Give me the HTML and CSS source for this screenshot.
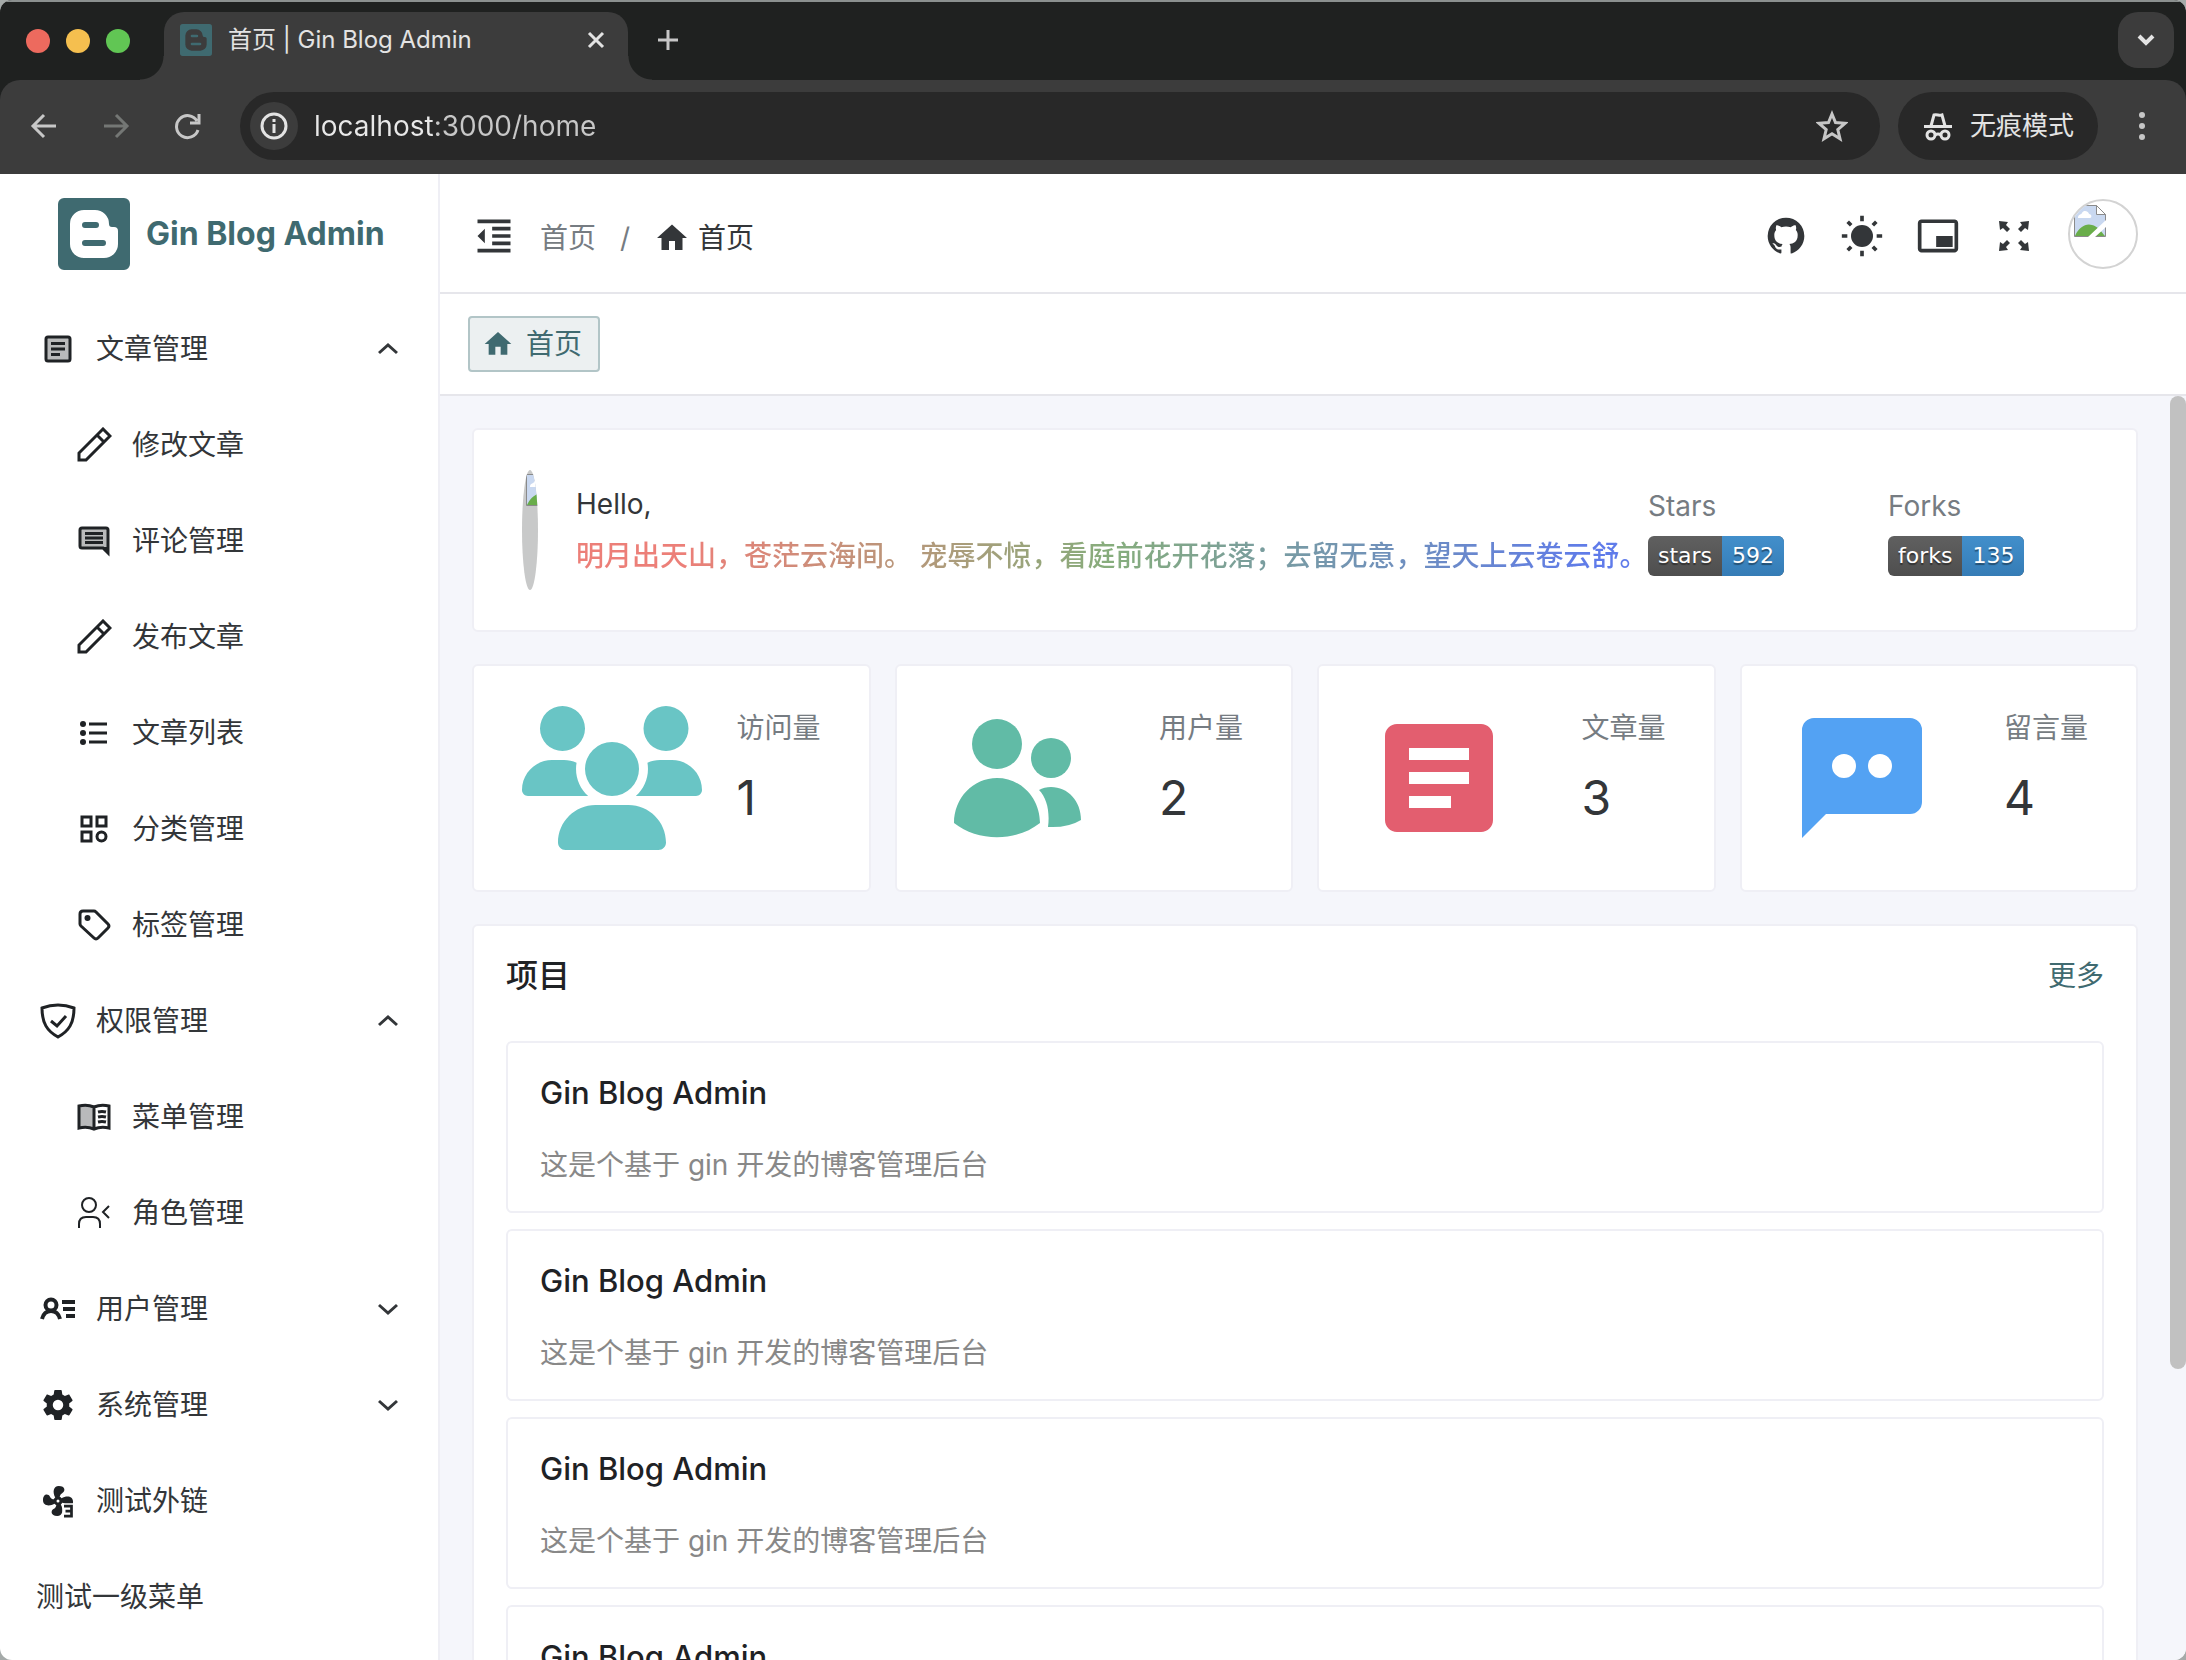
FILE: index.html
```html
<!DOCTYPE html>
<html lang="zh-CN">
<head>
<meta charset="utf-8">
<title>首页 | Gin Blog Admin</title>
<link rel="stylesheet" href="styles.css">
</head>
<body>
<svg class="sprite" aria-hidden="true">
  <symbol id="logo" viewBox="0 0 72 72"><path fill-rule="evenodd" d="M6 0h60a6 6 0 0 1 6 6v60a6 6 0 0 1-6 6H6a6 6 0 0 1-6-6V6a6 6 0 0 1 6-6zM26 12a14 14 0 0 0-14 14v20a14 14 0 0 0 14 14h20a14 14 0 0 0 14-14V33q0-4-4-4h-2q-3 0-3-3a14 14 0 0 0-14-14zM27 24h11a3 3 0 0 1 0 6H27a3 3 0 0 1 0-6zM27 42h18a3 3 0 0 1 0 6H27a3 3 0 0 1 0-6z"/></symbol>
  <symbol id="home" viewBox="0 0 24 24"><path d="M10 20v-6h4v6h5v-8h3L12 3 2 12h3v8z"/></symbol>
  <symbol id="up" viewBox="0 0 24 24"><path class="line" d="M3 16l9-8 9 8"/></symbol>
  <symbol id="pencil" viewBox="0 0 36 36"><path class="line" d="M3 33v-7L24 5l3-3 7 7-3 3L10 33zM21 8l7 7"/></symbol>
  <symbol id="image-missing" viewBox="0 0 32 32"><path fill="#c9d8f0" stroke="#8a8a8a" stroke-width="1" d="M.5.5h22L31.500 9.500v22H.5z"/><path fill="#fff" d="M4 13c0-4 3-3 4-5 2-4 7-1 7 1 3 0 3 4 1 4z"/><path fill="#69ad4a" d="M1 31C5 22 12 18 18 20c5 1 9 6 13 11z"/><path fill="#fff" d="M14 32L32 15v7L21 32zM23 0h9v9z"/><path fill="#fff" stroke="#8a8a8a" d="M22.500.5v9h9z"/></symbol>
</svg>
<div class="window">
  <header class="browser">
    <div class="tabstrip">
      <div class="lights"><i class="red"></i><i class="amber"></i><i class="green"></i></div>
      <div class="tab">
        <svg class="favicon"><use href="#logo"/></svg>
        <span class="tab-title">首页 | Gin Blog Admin</span>
        <button class="plain" aria-label="关闭"><svg class="i24" viewBox="0 0 24 24"><path class="line" d="M5 5l14 14M19 5L5 19"/></svg></button>
      </div>
      <button class="plain new-tab" aria-label="新标签页"><svg class="i24" viewBox="0 0 24 24"><path class="line" d="M12 2v20M2 12h20"/></svg></button>
      <button class="tab-search" aria-label="搜索标签页"><svg class="i24" viewBox="0 0 24 24"><path class="line thick" d="M5 8l7 7 7-7"/></svg></button>
    </div>
    <div class="toolbar">
      <button class="plain" aria-label="后退"><svg class="i28" viewBox="0 0 28 28"><path class="line" d="M26 14H4M14 3L3 14l11 11"/></svg></button>
      <button class="plain dim" aria-label="前进"><svg class="i28" viewBox="0 0 28 28"><path class="line" d="M2 14h22M14 3l11 11-11 11"/></svg></button>
      <button class="plain" aria-label="重新加载"><svg class="i28" viewBox="0 0 28 28"><path class="line" d="M24 18a11 11 0 1 1-1-9M25 2v9h-9"/></svg></button>
      <div class="omnibox">
        <button class="site-info" aria-label="网站信息"><svg class="i28" viewBox="0 0 28 28"><circle class="line" cx="14" cy="14" r="12"/><path class="line" d="M14 12v9M14 7v3"/></svg></button>
        <input class="url" type="text" aria-label="地址" value="localhost:3000/home">
        <button class="plain" aria-label="收藏"><svg class="i32" viewBox="0 0 32 32"><path class="line" d="M16 4l3.500 8.500 9.500.8-7.200 6.200 2.200 9.200-8-5-8 5 2.200-9.200L3 13.300l9.500-.8z"/></svg></button>
      </div>
      <button class="incognito"><svg class="i32" viewBox="0 0 32 32"><path class="line" d="M2 16.500h28M9 16l3-11c3-1 5 1 8 0l3 11M13 25q3-2 6 0"/><circle class="line" cx="9" cy="25" r="4"/><circle class="line" cx="23" cy="25" r="4"/></svg>无痕模式</button>
      <button class="plain" aria-label="更多选项"><svg class="i28" viewBox="0 0 28 28"><circle cx="14" cy="3" r="3"/><circle cx="14" cy="14" r="3"/><circle cx="14" cy="25" r="3"/></svg></button>
    </div>
  </header>

  <div class="app">
    <aside class="sidebar">
      <a class="brand" href="#"><svg class="brand-logo"><use href="#logo"/></svg>Gin Blog Admin</a>
      <nav class="menu">
        <a href="#"><svg class="i36" viewBox="0 0 36 36"><rect class="line tint" x="6" y="6" width="24" height="24" rx="2"/><path class="line" d="M11 12.500h14M11 18h14M11 23.500h9"/></svg>文章管理<svg class="chev"><use href="#up"/></svg></a>
        <a class="sub" href="#"><svg class="i36"><use href="#pencil"/></svg>修改文章</a>
        <a class="sub" href="#"><svg class="i36" viewBox="0 0 36 36"><path class="line tint" d="M6 5h24q2 0 2 2v23l-5-5H6q-2 0-2-2V7q0-2 2-2z"/><path d="M27 24h6v8z"/><path class="line" d="M9 10.500h18M9 15h18M9 19.500h18"/></svg>评论管理</a>
        <a class="sub" href="#"><svg class="i36"><use href="#pencil"/></svg>发布文章</a>
        <a class="sub" href="#"><svg class="i36" viewBox="0 0 36 36"><circle cx="7" cy="9" r="3"/><circle cx="7" cy="18" r="3"/><circle cx="7" cy="27" r="3"/><path class="line" d="M13 9h18M13 18h18M13 27h18"/></svg>文章列表</a>
        <a class="sub" href="#"><svg class="i36" viewBox="0 0 36 36"><path class="line" d="M6 6h9v9H6zM21 6h9v9h-9zM6 21h9v9H6z"/><circle class="line" cx="25.500" cy="25.500" r="4.500"/></svg>分类管理</a>
        <a class="sub" href="#"><svg class="i36" viewBox="0 0 36 36"><path class="line" d="M7 4h11q1 0 2 1l12 12q2 2 0 4L22 31q-2 2-4 0L5 19q-1-1-1-2V7q0-3 3-3z"/><circle cx="11.500" cy="11" r="3"/></svg>标签管理</a>
        <a href="#"><svg class="i36" viewBox="0 0 36 36"><path class="line" d="M18 2q8 0 16 3c0 15-5 23-16 29C7 28 2 20 2 5q8-3 16-3zM11 18l6 5 9-10"/></svg>权限管理<svg class="chev"><use href="#up"/></svg></a>
        <a class="sub" href="#"><svg class="i36" viewBox="0 0 36 36"><path class="tint" d="M3 7q8-2 15 0v22q-7-2-15 0z"/><path class="line" d="M3 7q8-2 15 1 7-3 15-1v22q-8-2-15 1-7-3-15-1zM18 8v22M22 13q4-1 8 0M22 18q4-1 8 0M22 23q4-1 8 0"/></svg>菜单管理</a>
        <a class="sub" href="#"><svg class="i36" viewBox="0 0 36 36"><circle class="line thin" cx="13" cy="10" r="7"/><path class="line thin" d="M3 33v-4q0-7 7-7h7q7 0 7 7v4M33 11l-6 6 6 6"/></svg>角色管理</a>
        <a href="#"><svg class="i36" viewBox="0 0 36 36"><circle class="line bold" cx="11" cy="14" r="5.500"/><path class="line bold" d="M2 28q2-8 9-8t9 8M22 11h13M23 18h12M26 25h9"/></svg>用户管理<svg class="chev down"><use href="#up"/></svg></a>
        <a href="#"><svg class="i36" viewBox="0 0 24 24"><path d="M12 15.500A3.500 3.500 0 0 1 8.500 12 3.500 3.500 0 0 1 12 8.500a3.500 3.500 0 0 1 3.500 3.500 3.500 3.500 0 0 1-3.500 3.500m7.430-2.530c.04-.32.07-.64.07-.97s-.03-.66-.07-1l2.110-1.630c.19-.15.24-.42.12-.64l-2-3.460c-.12-.22-.39-.31-.61-.22l-2.490 1c-.52-.39-1.060-.73-1.690-.98l-.37-2.650A.506.506 0 0 0 14 2h-4c-.25 0-.46.18-.5.42l-.37 2.650c-.63.25-1.170.59-1.690.98l-2.490-1c-.22-.09-.49 0-.61.22l-2 3.460c-.13.22-.07.49.12.64L4.570 11c-.04.34-.07.67-.07 1s.03.65.07.97l-2.110 1.660c-.19.15-.25.42-.12.64l2 3.460c.12.22.39.3.61.22l2.490-1.010c.52.4 1.060.74 1.690.99l.37 2.650c.04.24.25.42.5.42h4c.25 0 .46-.18.5-.42l.37-2.650c.63-.26 1.170-.59 1.690-.99l2.490 1.010c.22.08.49 0 .61-.22l2-3.460c.12-.22.07-.49-.12-.64z"/></svg>系统管理<svg class="chev down"><use href="#up"/></svg></a>
        <a href="#"><svg class="i36" viewBox="0 0 24 24"><path d="M12 11a1 1 0 0 0-1 1 1 1 0 0 0 1 1 1 1 0 0 0 1-1 1 1 0 0 0-1-1m.5-9C17 2 17.110 5.570 14.750 6.750c-.99.49-1.430 1.540-1.620 2.470.48.2.9.51 1.220.91 3.700-2 7.680-1.210 7.680 2.370 0 4.500-3.570 4.600-4.750 2.230-.5-.99-1.560-1.430-2.490-1.620-.2.48-.51.89-.91 1.220 1.990 3.690 1.200 7.670-2.380 7.670-4.500 0-4.590-3.580-2.230-4.760.98-.49 1.420-1.530 1.620-2.450-.49-.2-.92-.52-1.240-.92C5.960 15.850 2 15.070 2 11.500 2 7 5.560 6.890 6.740 9.260c.5.99 1.550 1.420 2.480 1.610.19-.48.51-.9.92-1.220C8.150 5.960 8.940 2 12.500 2"/><path fill="#fff" d="M15 13.500h9V24h-9z"/><path fill="none" stroke="currentColor" stroke-width="1.800" d="M16 15.400h5v6.700h-5M17 18.700h4"/></svg>测试外链</a>
        <a href="#">测试一级菜单</a>
      </nav>
    </aside>

    <div class="body">
      <div class="topbar">
        <button class="plain" aria-label="折叠菜单"><svg class="i44" viewBox="0 0 24 24"><path d="M11 13h10v-2H11zm0-4h10V7H11zM3 3v2h18V3zM3 21h18v-2H3zm0-9l4 4V8zm8 5h10v-2H11z"/></svg></button>
        <nav class="crumbs"><a href="#">首页</a><span>/</span><a class="here" href="#"><svg class="i36"><use href="#home"/></svg>首页</a></nav>
        <div class="actions">
          <a href="#" aria-label="GitHub"><svg class="i44" viewBox="0 0 24 24"><path d="M12 2A10 10 0 0 0 2 12c0 4.420 2.870 8.170 6.840 9.500.5.080.66-.23.66-.5v-1.690c-2.770.6-3.360-1.340-3.360-1.340-.46-1.160-1.110-1.470-1.110-1.470-.91-.62.070-.6.070-.6 1 .07 1.530 1.030 1.530 1.030.87 1.520 2.340 1.070 2.910.83.09-.65.35-1.090.63-1.340-2.220-.25-4.550-1.110-4.550-4.920 0-1.110.38-2 1.030-2.710-.1-.25-.45-1.290.1-2.640 0 0 .84-.27 2.750 1.020.79-.22 1.650-.33 2.500-.33s1.710.11 2.500.33c1.910-1.290 2.750-1.020 2.750-1.020.55 1.350.2 2.390.1 2.640.65.71 1.030 1.600 1.030 2.710 0 3.820-2.340 4.660-4.570 4.910.36.31.69.92.69 1.850V21c0 .27.16.59.67.5C19.140 20.160 22 16.420 22 12A10 10 0 0 0 12 2"/></svg></a>
          <button class="plain" aria-label="主题"><svg class="i44" viewBox="0 0 24 24"><circle cx="12" cy="12" r="6"/><path class="line" d="M12 1v3M12 20v3M1 12h3M20 12h3M4.200 4.200l1.900 1.900M17.900 17.900l1.900 1.900M4.200 19.800l1.900-1.900M17.900 6.100l1.900-1.900"/></svg></button>
          <button class="plain" aria-label="画中画"><svg class="i44" viewBox="0 0 24 24"><path d="M20 12h-9v6h9zm3 7V4.980C23 3.880 22.100 3 21 3H3c-1.100 0-2 .88-2 1.980V19c0 1.100.9 2 2 2h18c1.100 0 2-.9 2-2zm-2 .02H3V4.970h18z"/></svg></button>
          <button class="plain" aria-label="全屏"><svg class="i44" viewBox="0 0 44 44"><path d="M7 7l9 1-2 3 4 4-3 3-4-4-3 2zM37 7l-9 1 2 3-4 4 3 3 4-4 3 2zM7 37l9-1-2-3 4-4-3-3-4 4-3-2zM37 37l-9-1 2-3-4-4 3-3 4 4 3-2z"/></svg></button>
          <button class="avatar" aria-label="用户"><svg class="i32"><use href="#image-missing"/></svg></button>
        </div>
      </div>
      <div class="tags"><a class="tag" href="#"><svg><use href="#home"/></svg>首页</a></div>
      <div class="viewport">
        <main>
          <section class="card hello">
            <div class="portrait"><svg class="i32"><use href="#image-missing"/></svg></div>
            <div class="greeting"><p>Hello,</p><p class="poem">明月出天山，苍茫云海间。 宠辱不惊，看庭前花开花落；去留无意，望天上云卷云舒。</p></div>
            <div class="repo"><span>Stars</span><a class="badge" href="#"><span>stars</span><b>592</b></a></div>
            <div class="repo"><span>Forks</span><a class="badge" href="#"><span>forks</span><b>135</b></a></div>
          </section>
          <section class="stats">
            <div class="card stat"><svg class="wide teal" viewBox="0 0 640 512"><path d="M144 0a80 80 0 1 1 0 160 80 80 0 1 1 0-160zm368 0a80 80 0 1 1 0 160 80 80 0 1 1 0-160zM0 298.700C0 239.800 47.800 192 106.700 192h42.700c15.900 0 31 3.500 44.600 9.700-1.300 7.200-1.900 14.700-1.900 22.300 0 38.200 16.800 72.500 43.300 96H21.300C9.600 320 0 310.400 0 298.700zM405.300 320h-.7c26.600-23.500 43.300-57.800 43.300-96 0-7.600-.7-15-1.900-22.300 13.600-6.300 28.700-9.700 44.600-9.700h42.700c58.900 0 106.700 47.800 106.700 106.700 0 11.800-9.600 21.300-21.300 21.300zM224 224a96 96 0 1 1 192 0 96 96 0 1 1-192 0zm-96 261.300C128 411.700 187.700 352 261.300 352h117.300c73.700 0 133.400 59.700 133.400 133.300 0 14.700-11.900 26.700-26.700 26.700H154.600c-14.700 0-26.600-11.900-26.600-26.700z"/></svg><p>访问量<strong>1</strong></p></div>
            <div class="card stat"><svg class="green-icon" viewBox="0 0 144 144"><circle cx="52" cy="38" r="25"/><circle cx="106" cy="52" r="20"/><path d="M52 72c24 0 43 20 43 45-24 19-62 19-86 0 0-25 19-45 43-45zM94 84c3-2 8-3 12-3 17 0 30 14 30 33q-13 8-33 7c2-15-1-29-9-37z"/></svg><p>用户量<strong>2</strong></p></div>
            <div class="card stat"><svg class="rose" viewBox="0 0 24 24"><path fill-rule="evenodd" d="M5 3c-1.100 0-2 .9-2 2v14c0 1.100.9 2 2 2h14c1.100 0 2-.9 2-2V5c0-1.100-.9-2-2-2zm2 4h10v2H7zm0 4h10v2H7zm0 4h7v2H7z"/></svg><p>文章量<strong>3</strong></p></div>
            <div class="card stat"><svg class="blue" viewBox="0 0 24 24"><path fill-rule="evenodd" d="M20 2H4a2 2 0 0 0-2 2v18l4-4h14a2 2 0 0 0 2-2V4a2 2 0 0 0-2-2zM9 12a2 2 0 1 1 0-4 2 2 0 0 1 0 4zm6 0a2 2 0 1 1 0-4 2 2 0 0 1 0 4z"/></svg><p>留言量<strong>4</strong></p></div>
          </section>
          <section class="card projects">
            <div class="projects-head"><h2>项目</h2><a href="#">更多</a></div>
            <article class="card project"><h3>Gin Blog Admin</h3><p>这是个基于 gin 开发的博客管理后台</p></article>
            <article class="card project"><h3>Gin Blog Admin</h3><p>这是个基于 gin 开发的博客管理后台</p></article>
            <article class="card project"><h3>Gin Blog Admin</h3><p>这是个基于 gin 开发的博客管理后台</p></article>
            <article class="card project"><h3>Gin Blog Admin</h3><p>这是个基于 gin 开发的博客管理后台</p></article>
          </section>
        </main>
        <div class="scroll-thumb"></div>
      </div>
    </div>
  </div>
</div>
</body>
</html>
```
FILE: styles.css
```css
* { box-sizing: border-box; }
body {
  margin: 0;
  background: #a5aaa9;
  color: #333639;
  font: 28px/44px Inter, "Noto Sans CJK SC", sans-serif;
}
a { color: inherit; text-decoration: none; }
button, input { font: inherit; color: inherit; border: 0; background: none; padding: 0; }
p, h2, h3 { margin: 0; }
svg { display: block; flex: none; fill: currentColor; }
.sprite { position: absolute; width: 0; height: 0; }
.line { fill: none; stroke: currentColor; stroke-width: 3; }
.i44 .line, .thin { stroke-width: 2; }
.bold { stroke-width: 4; }
.thick { stroke-width: 4; }
.tint { fill: #b9babb; }
.i24 { width: 24px; height: 24px; }
.i28 { width: 28px; height: 28px; }
.i32 { width: 32px; height: 32px; }
.i36 { width: 36px; height: 36px; }
.i44 { width: 44px; height: 44px; }
.plain { display: flex; align-items: center; }

.window {
  display: flex;
  flex-direction: column;
  height: 100vh;
  overflow: hidden;
  border-radius: 12px;
  background: #fff;
}

/* browser chrome */
.browser { background: #1f2120; color: #c7c7c7; }
.tabstrip {
  display: flex;
  align-items: center;
  height: 80px;
  padding: 10px 12px 0 26px;
  border-top: 2px solid #8b908f;
}
.lights { display: flex; gap: 16px; width: 138px; padding-bottom: 10px; }
.lights i { width: 24px; height: 24px; border-radius: 50%; }
.red { background: #ed6a5e; }
.amber { background: #f5bf4f; }
.green { background: #61c654; }
.tab {
  position: relative;
  display: flex;
  align-items: center;
  width: 464px;
  height: 68px;
  padding: 0 20px 12px 16px;
  border-radius: 20px 20px 0 0;
  background: #3c3c3c;
  color: #e3e3e3;
}
.tab::before, .tab::after {
  content: "";
  position: absolute;
  bottom: 0;
  width: 24px;
  height: 24px;
}
.tab::before { right: 100%; background: radial-gradient(circle at 0 0, transparent 23px, #3c3c3c 24px); }
.tab::after { left: 100%; background: radial-gradient(circle at 100% 0, transparent 23px, #3c3c3c 24px); }
.favicon { width: 32px; height: 32px; color: #3f6a70; }
.tab-title { flex: 1; padding-left: 16px; font-size: 24px; }
.new-tab { margin: 0 auto 12px 28px; }
.tab-search {
  display: grid;
  place-items: center;
  width: 56px;
  height: 56px;
  margin-bottom: 12px;
  border-radius: 20px;
  background: #3c3c3c;
  color: #e3e3e3;
}
.toolbar {
  display: flex;
  align-items: center;
  gap: 44px;
  height: 94px;
  padding: 0 30px 2px;
  border-radius: 20px 20px 0 0;
  background: #3c3c3c;
}
.dim { color: #747775; }
.omnibox {
  display: flex;
  align-items: center;
  flex: 1;
  gap: 16px;
  height: 68px;
  margin-left: -6px;
  margin-right: -26px;
  padding: 0 32px 0 10px;
  border-radius: 34px;
  background: #282828;
}
.site-info {
  display: grid;
  place-items: center;
  width: 48px;
  height: 48px;
  border-radius: 50%;
  background: #3c3c3c;
  color: #e3e3e3;
}
.url {
  flex: 1;
  min-width: 0;
  background: linear-gradient(90deg, #e8e8e8 122px, #c7c7c7 122px);
  background-clip: text;
  color: transparent;
}
.incognito {
  display: flex;
  align-items: center;
  gap: 16px;
  height: 68px;
  padding: 0 24px;
  margin-right: -14px;
  border-radius: 34px;
  background: #282828;
  color: #e3e3e3;
  font-size: 26px;
}

/* app shell */
.app { display: flex; flex: 1; min-height: 0; }
.sidebar { width: 440px; flex: none; border-right: 2px solid #efeff5; }
.brand {
  display: flex;
  align-items: center;
  gap: 16px;
  height: 120px;
  padding-left: 58px;
  color: #3f6a70;
  font-size: 32px;
  font-weight: 700;
}
.brand-logo { width: 72px; height: 72px; }
.menu { padding-top: 7px; }
.menu a {
  display: flex;
  align-items: center;
  height: 96px;
  padding: 0 38px 0 36px;
  gap: 20px;
}
.menu a > .i36 { margin-left: 4px; color: #1f2225; }
.menu .sub { padding-left: 72px; }
.chev { width: 24px; height: 24px; margin-left: auto; }
.down { transform: rotate(180deg); }
.body { display: flex; flex: 1; flex-direction: column; min-width: 0; }
.topbar {
  display: flex;
  align-items: center;
  height: 120px;
  padding: 6px 48px 0 32px;
  border-bottom: 2px solid #e6e6eb;
}
.crumbs { display: flex; align-items: center; padding: 4px 0 0 24px; color: #767c82; }
.crumbs span { padding: 0 24px; }
.here { display: flex; align-items: center; gap: 8px; color: #333639; }
.actions { display: flex; align-items: center; gap: 32px; margin-left: auto; }
.avatar {
  display: flex;
  align-items: flex-start;
  width: 70px;
  height: 70px;
  margin-bottom: 4px;
  padding: 4px;
  overflow: hidden;
  border: 2px solid #d3d3d3;
  border-radius: 50%;
}
.tags { height: 102px; padding: 22px 28px; border-bottom: 2px solid #e6e6eb; }
.tag {
  display: inline-flex;
  align-items: center;
  gap: 12px;
  height: 56px;
  padding: 0 16px 0 12px;
  border: 2px solid #b2c5c7;
  border-radius: 4px;
  background: #ecf0f1;
  color: #3f6a70;
}
.tag svg { width: 32px; height: 32px; }

/* dashboard */
.viewport { position: relative; flex: 1; min-height: 0; overflow: hidden; background: #f5f6fb; }
.scroll-thumb {
  position: absolute;
  top: 0;
  right: 0;
  width: 16px;
  height: 77%;
  border-radius: 8px;
  background: #c1c1c1;
}
main { display: flex; flex-direction: column; gap: 32px; padding: 32px 48px 32px 32px; }
.card { border: 2px solid #efeff5; border-radius: 6px; background: #fff; }
.hello { display: flex; align-items: center; height: 204px; padding: 0 48px; }
.portrait { width: 16px; height: 120px; padding: 4px; overflow: hidden; border-radius: 50%; background: #c8c9c9; }
.greeting { flex: 1; padding-left: 38px; white-space: nowrap; }
.greeting p + p { margin-top: 8px; }
.poem {
  width: max-content;
  background: linear-gradient(90deg, #ec7f78 10%, #86ad7c 50%, #5f7bea 95%);
  background-clip: text;
  color: transparent;
  font-weight: 500;
}
.repo { width: 240px; color: #767c82; }
.repo + .repo { width: 200px; }
.badge {
  display: flex;
  width: max-content;
  height: 40px;
  margin-top: 8px;
  overflow: hidden;
  border-radius: 6px;
  background: linear-gradient(#606060, #4e4e4e);
  color: #fff;
  font: 22px/40px "DejaVu Sans", sans-serif;
  text-shadow: 0 2px 1px #0006;
}
.badge span, .badge b { padding: 0 10px; font-weight: 400; }
.badge b { background: linear-gradient(#428fcb, #357cb6); }
.stats { display: grid; grid-template-columns: repeat(4, 1fr); gap: 24px; }
.stat {
  display: flex;
  align-items: center;
  justify-content: space-between;
  height: 228px;
  padding: 0 48px;
}
.stat svg { width: 144px; height: 144px; }
.stat .wide { width: 180px; }
.teal { fill: #69c5c5; }
.green-icon { fill: #61bba6; }
.rose { fill: #e35e6f; }
.blue { fill: #53a2f3; }
.stat p { padding-bottom: 20px; color: #767c82; }
.stat strong { display: block; margin-top: 16px; color: #333639; font-size: 48px; font-weight: 400; line-height: 64px; }
.projects { padding: 28px 32px; }
.projects-head { display: flex; align-items: center; justify-content: space-between; margin-bottom: 43px; color: #3f6a70; }
h2, h3 { color: #1f2225; font-size: 32px; font-weight: 500; }
h3 { font-size: 31px; }
.project { height: 172px; padding: 28px 32px; }
.project + .project { margin-top: 16px; }
.project p { margin-top: 28px; color: #888; }
```
